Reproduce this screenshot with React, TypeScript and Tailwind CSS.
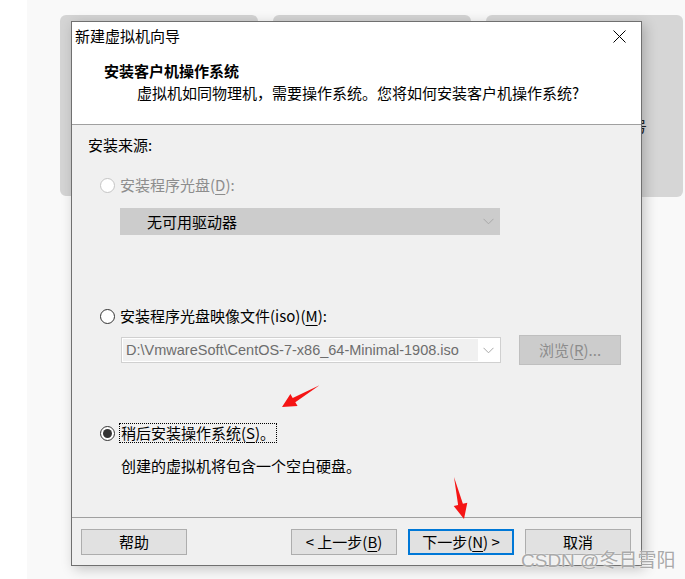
import React from "react";

const U = ({ children }: { children: React.ReactNode }) => (
  <span className="underline decoration-1 underline-offset-[3px]">{children}</span>
);

function Radio({ checked, disabled }: { checked?: boolean; disabled?: boolean }) {
  return (
    <span
      className={
        disabled
          ? "flex h-[15px] w-[15px] shrink-0 items-center justify-center rounded-full border border-[#c4c4c4] bg-white"
          : "flex h-[15px] w-[15px] shrink-0 items-center justify-center rounded-full border border-[#333333] bg-white"
      }
    >
      {checked && <span className="h-[9px] w-[9px] rounded-full bg-[#333333]" />}
    </span>
  );
}

function Chevron() {
  return (
    <svg width="11" height="7" viewBox="0 0 11 7">
      <path d="M0.5 0.8 L5.5 5.8 L10.5 0.8" fill="none" stroke="#a8a8a8" strokeWidth="1" />
    </svg>
  );
}

function Btn({ children, focused }: { children: React.ReactNode; focused?: boolean }) {
  return (
    <div
      className={
        focused
          ? "flex h-[26px] w-[106px] items-center justify-center border-2 border-[#0078d7] bg-[#e1e1e1]"
          : "flex h-[26px] w-[106px] items-center justify-center border border-[#adadad] bg-[#e1e1e1]"
      }
    >
      {children}
    </div>
  );
}

export default function App() {
  return (
    <div className="relative h-[579px] w-[685px] overflow-hidden bg-white font-['Noto_Sans_CJK_SC',sans-serif] text-[15px] leading-[20px] text-black">
      {/* backdrop */}
      <div className="absolute inset-y-0 left-[27px] right-0 bg-[#f9f9f9]" />
      <div className="absolute left-[60px] top-[15px] h-[181px] w-[198px] rounded-[6px] bg-[#d4d4d4]" />
      <div className="absolute left-[273px] top-[15px] h-[181px] w-[198px] rounded-[6px] bg-[#d4d4d4]" />
      <div className="absolute left-[486px] top-[15px] h-[182px] w-[197px] rounded-[6px] bg-[#d6d6d6]">
        <span className="absolute left-[146px] top-[103px] text-[15px] leading-[15px] text-[#222]">号</span>
      </div>

      {/* dialog */}
      <div className="relative pl-[71px] pt-[21px]">
        <div className="flex h-[545px] w-[571px] flex-col border border-[#707070] bg-[#f0f0f0] shadow-[3px_3px_12px_rgba(0,0,0,0.22)]">
          {/* header */}
          <div className="h-[103px] border-b border-[#a0a0a0] bg-white">
            <div className="flex items-center justify-between pl-[3px] pr-[15px] pt-[4px]">
              <span>新建虚拟机向导</span>
              <svg width="13" height="13" viewBox="0 0 13 13">
                <path d="M0.5 0.5 L12.5 12.5 M12.5 0.5 L0.5 12.5" stroke="#000" strokeWidth="1" />
              </svg>
            </div>
            <div className="mt-[15px] pl-[32px] font-bold">安装客户机操作系统</div>
            <div className="mt-[2px] pl-[65px]">虚拟机如同物理机，需要操作系统。您将如何安装客户机操作系统?</div>
          </div>

          {/* body */}
          <div className="flex-1 pl-[16px] pt-[10px]">
            <div>安装来源:</div>

            <div className="ml-[12px] mt-[20px] flex items-center gap-[5px] text-[#8d8d8d]">
              <Radio disabled />
              <span>
                安装程序光盘(<U>D</U>):
              </span>
            </div>
            <div className="ml-[32px] mt-[13px] flex h-[27px] w-[380px] items-center justify-between bg-[#cccccc] pl-[27px] pr-[6px]">
              <span>无可用驱动器</span>
              <Chevron />
            </div>

            <div className="ml-[12px] mt-[71px] flex items-center gap-[5px]">
              <Radio />
              <span>
                安装程序光盘映像文件(iso)(<U>M</U>):
              </span>
            </div>
            <div className="ml-[33px] mt-[9px] flex items-center">
              <div className="flex h-[26px] w-[380px] items-center border border-[#d0d0d0] bg-white p-[1px]">
                <div className="flex h-full w-[355px] items-center overflow-hidden whitespace-nowrap bg-[#f0f0f0] pl-[3px] font-['Liberation_Sans',sans-serif] text-[14.5px] text-[#6d6d6d]">
                  {"D:\\VmwareSoft\\CentOS-7-x86_64-Minimal-1908.iso"}
                </div>
                <div className="flex flex-1 justify-center">
                  <Chevron />
                </div>
              </div>
              <div className="ml-[18px] flex h-[30px] w-[102px] items-center justify-center border border-[#bfbfbf] bg-[#cccccc] text-[#8c8c8c]">
                浏览(<U>R</U>)...
              </div>
            </div>

            <div className="ml-[12px] mt-[58px] flex items-center gap-[4px]">
              <Radio checked />
              <span className="border border-dotted border-black px-[1px] leading-[18px]">
                稍后安装操作系统(<U>S</U>)。
              </span>
            </div>
            <div className="ml-[33px] mt-[13px]">创建的虚拟机将包含一个空白硬盘。</div>
          </div>

          {/* footer */}
          <div className="flex h-[48px] border-t border-[#a0a0a0] pl-[9px] pr-[10px] pt-[11px]">
            <Btn>帮助</Btn>
            <div className="flex-1" />
            <Btn>
              &lt; 上一步(<U>B</U>)
            </Btn>
            <div className="ml-[11px]">
              <Btn focused>
                下一步(<U>N</U>) &gt;
              </Btn>
            </div>
            <div className="ml-[11px]">
              <Btn>取消</Btn>
            </div>
          </div>
        </div>
      </div>

      {/* watermark */}
      <div className="absolute left-[521px] top-[551px] font-['Liberation_Sans','Noto_Sans_CJK_SC',sans-serif] text-[19px] leading-[19px] text-[#a9a9a9] [text-shadow:0_0_2px_#ffffff]">
        CSDN @冬日雪阳
      </div>

      {/* red arrows */}
      <svg className="pointer-events-none absolute inset-0" width="685" height="579" viewBox="0 0 685 579">
        <polygon
          points="319.5,385.3 295.3,402.2 297.6,406 282,407 290.4,394 292.7,397.9"
          fill="#f51414"
        />
        <polygon
          points="454,477 462.9,503.8 467.3,502.8 464,519 453.7,506 458.1,505"
          fill="#f51414"
        />
      </svg>
    </div>
  );
}
